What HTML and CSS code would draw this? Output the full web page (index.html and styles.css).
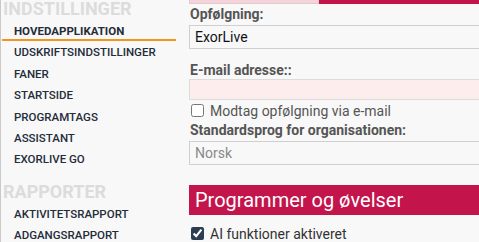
FILE: index.html
```html
<!DOCTYPE html>
<html>
<head>
    <meta charset="UTF-8">
    <title>Indstillinger</title>
    <link rel="stylesheet" href="styles.css">
</head>
<body>
    <div class="page">
        <div class="sidebar">
            <div class="menu-header first">INDSTILLINGER</div>
            <div class="menu-item active">HOVEDAPPLIKATION</div>
            <div class="menu-item">UDSKRIFTSINDSTILLINGER</div>
            <div class="menu-item">FANER</div>
            <div class="menu-item">STARTSIDE</div>
            <div class="menu-item">PROGRAMTAGS</div>
            <div class="menu-item">ASSISTANT</div>
            <div class="menu-item">EXORLIVE GO</div>

            <div class="menu-header">RAPPORTER</div>
            <div class="menu-item">AKTIVITETSRAPPORT</div>
            <div class="menu-item">ADGANGSRAPPORT</div>
        </div>

        <div class="main">
            <div class="top-row">
                <div class="top-input"></div>
                <div class="top-button"></div>
            </div>

            <label class="field-label first">Opfølgning:</label>
            <div class="field">ExorLive</div>

            <label class="field-label spaced">E-mail adresse::</label>
            <div class="field field-error"></div>

            <label class="check-row">
                <input type="checkbox">
                <span>Modtag opfølgning via e-mail</span>
            </label>

            <label class="field-label">Standardsprog for organisationen:</label>
            <div class="field field-disabled">Norsk</div>

            <h2 class="section-title">Programmer og øvelser</h2>

            <label class="check-row dark">
                <input type="checkbox" checked>
                <span>AI funktioner aktiveret</span>
            </label>
        </div>
    </div>
</body>
</html>
```

FILE: styles.css
```css
body {
    margin: 0;
    padding: 0;
    width: 479px;
    height: 242px;
    overflow: hidden;
    background: #f8f8f8;
    font-family: Roboto, 'Liberation Sans', sans-serif;
    color: #333;
}

.page {
    display: flex;
    height: 100%;
}

.sidebar {
    width: 175px;
    flex-shrink: 0;
    border-left: 1px solid #c9c9c9;
}

.menu-header {
    padding-left: 2px;
    margin-top: 11px;
    font-size: 18px;
    line-height: 22px;
    font-weight: 700;
    color: #dcdcdc;
}

.menu-header.first {
    margin-top: -2px;
}

.menu-item {
    margin-left: 1px;
    padding: 4px 0 2.4px 12px;
    font-size: 11.5px;
    line-height: 15px;
    font-weight: 500;
    color: #252c3a;
    white-space: nowrap;
}

.menu-item.active {
    font-weight: 700;
    padding-bottom: 0.4px;
    border-bottom: 2px solid #f0961e;
}

.main {
    margin-left: 13px;
    flex: 1;
    min-width: 0;
    display: flex;
    flex-direction: column;
}

.top-row {
    display: flex;
    height: 4px;
}

.top-input {
    width: 128px;
    background: #f6d2db;
    border: 1px solid #dcc;
    border-top: none;
}

.top-button {
    flex: 1;
    background: #c4144c;
}

.field-label {
    display: block;
    font-size: 14px;
    line-height: 16px;
    font-weight: 700;
    color: #555;
    margin: 3px 0 3px 1px;
}

.field-label.first {
    margin-top: 2px;
}

.field-label.spaced {
    margin-top: 13px;
    margin-bottom: 1px;
}

.field {
    width: 320px;
    height: 24px;
    box-sizing: border-box;
    border: 1px solid #cfcfcf;
    background: #f8f8f8;
    padding: 0 5px;
    font-size: 14px;
    line-height: 22px;
    color: #111;
}

.field-error {
    background: #fdeded;
    border-color: #dcdcdc;
}

.field-disabled {
    color: #8a8a8a;
}

.check-row {
    display: flex;
    align-items: center;
    height: 19px;
    margin-top: 2px;
    font-size: 14px;
    color: #555;
}

.check-row input {
    width: 13px;
    height: 13px;
    margin: 0 6px 0 2px;
    accent-color: #2c3e50;
}

.check-row.dark {
    color: #333;
    margin-top: 10px;
}

.section-title {
    margin: 20px 0 0 0;
    height: 30px;
    padding-left: 6px;
    background: #c4144c;
    color: #fff;
    font-size: 20px;
    line-height: 30px;
    font-weight: 400;
    white-space: nowrap;
}
```
